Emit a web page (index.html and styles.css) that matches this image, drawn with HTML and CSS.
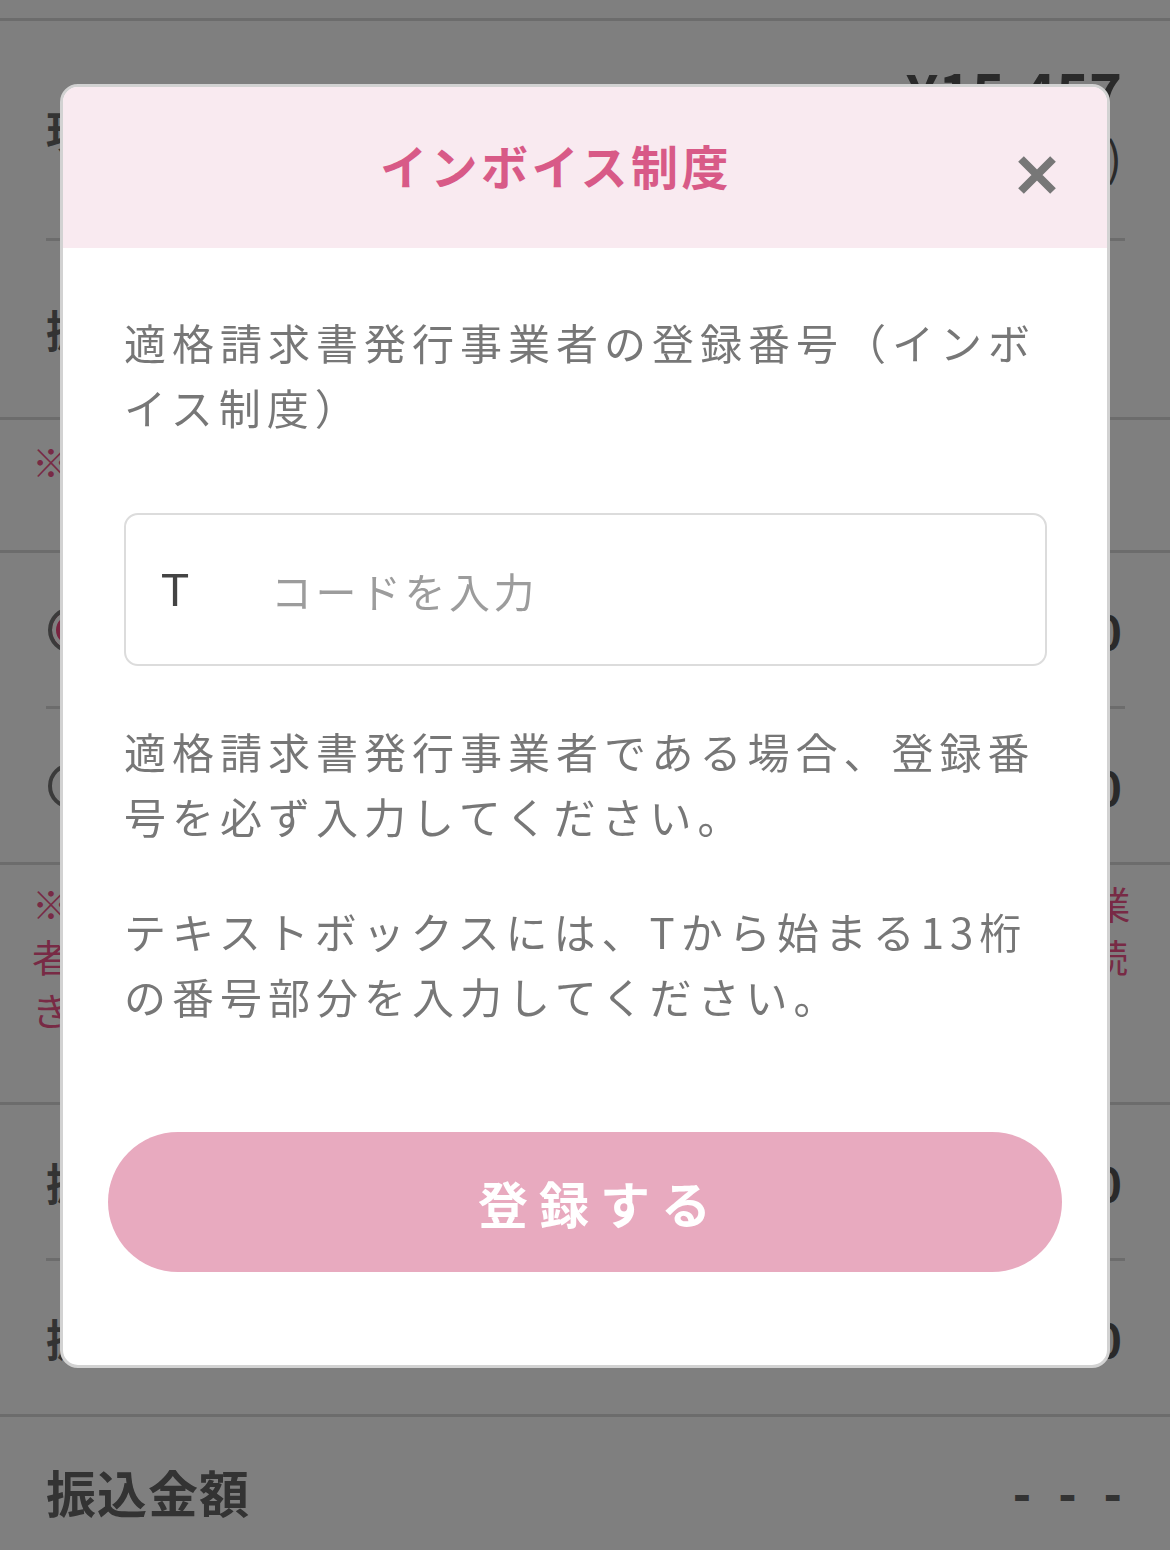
FILE: index.html
```html
<!DOCTYPE html>
<html lang="ja">
<head>
<meta charset="utf-8">
<title>インボイス制度</title>
<link rel="stylesheet" href="styles.css">
</head>
<body>
<div class="page">
  <div class="top-strip"></div>
  <div class="row row-amount">
    <span class="label">現在の売上金額</span>
    <div class="value-col">
      <span class="big-value">¥15,457</span>
      <span class="sub-value">(税込)</span>
    </div>
  </div>
  <div class="divider inset"></div>
  <div class="row row-fee">
    <span class="label">振込手数料</span>
  </div>
  <div class="divider"></div>
  <div class="note note-single">※振込申請は売上金額が一定額以上の場合に可能です。</div>
  <div class="divider"></div>
  <div class="row row-radio">
    <span class="radio on"></span>
    <span class="value">¥0</span>
  </div>
  <div class="divider inset"></div>
  <div class="row row-radio">
    <span class="radio"></span>
    <span class="value">¥0</span>
  </div>
  <div class="divider"></div>
  <div class="note note-multi">※インボイス制度の登録番号の入力により、適格請求書発行事業者としての取り扱いとなります。事業者の方は登録の上でお手続きをお願いします。</div>
  <div class="divider"></div>
  <div class="row row-plain">
    <span class="label">振込予定額</span>
    <span class="value">¥0</span>
  </div>
  <div class="divider inset"></div>
  <div class="row row-plain">
    <span class="label">振込先口座</span>
    <span class="value">¥0</span>
  </div>
  <div class="divider"></div>
  <div class="row row-total">
    <span class="total-label">振込金額</span>
    <span class="dashes">- - -</span>
  </div>
</div>

<div class="overlay"></div>

<div class="modal">
  <div class="modal-header">
    <h1 class="modal-title">インボイス制度</h1>
    <button class="close" aria-label="閉じる">
      <svg width="40" height="40" viewBox="0 0 40 40">
        <path d="M4 4 L36 36 M36 4 L4 36" stroke="#777" stroke-width="8" stroke-linecap="butt"/>
      </svg>
    </button>
  </div>
  <div class="modal-body">
    <p class="text">適格請求書発行事業者の登録番号（インボイス制度）</p>
    <div class="input-box">
      <span class="prefix">T</span>
      <span class="placeholder">コードを入力</span>
    </div>
    <p class="text para2">適格請求書発行事業者である場合、登録番号を必ず入力してください。</p>
    <p class="text para3">テキストボックスには、Tから始まる13桁の番号部分を入力してください。</p>
    <button class="submit">登録する</button>
  </div>
</div>
</body>
</html>
```

FILE: styles.css
```css
* { box-sizing: border-box; }

html, body {
  margin: 0;
  padding: 0;
  background: #ffffff;
  font-family: "Noto Sans CJK JP", "Noto Sans", sans-serif;
}

.page {
  width: 1170px;
  height: 1550px;
  overflow: hidden;
  display: flex;
  flex-direction: column;
  color: #666;
}

.top-strip {
  height: 18px;
  border-bottom: 3px solid #d8d8d8;
  flex: 0 0 auto;
  box-sizing: content-box;
}

.divider {
  height: 3px;
  background: #d8d8d8;
  flex: 0 0 3px;
}
.divider.inset {
  margin: 0 45px 0 46px;
}

.row {
  display: flex;
  align-items: center;
  justify-content: space-between;
  padding: 0 48px 0 46px;
}

.label {
  font-size: 44px;
  font-weight: 700;
  color: #666;
}

.value {
  font-size: 46px;
  font-weight: 700;
  color: #555;
}

.row-amount { height: 217px; }
.value-col {
  display: flex;
  flex-direction: column;
  align-items: flex-end;
  margin-top: -14px;
}
.big-value {
  font-size: 56px;
  font-weight: 700;
  line-height: 66px;
  color: #555;
}
.sub-value {
  font-size: 46px;
  line-height: 64px;
  color: #555;
}

.row-fee { height: 176px; }

.note {
  color: #f0558a;
  font-size: 38px;
  padding: 0 36px 0 32px;
}
.note-single {
  height: 130px;
  padding-top: 16px;
  line-height: 50px;
}
.note-multi {
  height: 237px;
  padding-top: 11px;
  line-height: 53px;
}

.row-radio { height: 153px; }
.radio {
  width: 46px;
  height: 46px;
  border-radius: 50%;
  border: 4px solid #777;
  margin-left: 2px;
}
.radio.on {
  background: #f24880;
  box-shadow: inset 0 0 0 4px #fff;
}

.row-plain { height: 153px; }

.row-total {
  flex: 1 1 auto;
  align-items: center;
  padding-top: 14px;
}
.total-label {
  font-size: 50px;
  font-weight: 700;
  color: #666;
  letter-spacing: 1px;
}
.dashes {
  font-size: 48px;
  font-weight: 900;
  color: #666;
  letter-spacing: 8px;
  margin-right: -8px;
}

.overlay {
  position: fixed;
  inset: 0;
  background: rgba(0, 0, 0, 0.5);
}

.modal {
  position: fixed;
  top: 84px;
  left: 60px;
  width: 1050px;
  height: 1284px;
  background: #fff;
  border: 3px solid #d2d2d2;
  border-radius: 18px;
  overflow: hidden;
  display: flex;
  flex-direction: column;
}

.modal-header {
  position: relative;
  height: 161px;
  flex: 0 0 161px;
  background: #f9eaf0;
  display: flex;
  align-items: center;
  justify-content: center;
  padding-right: 58px;
}

.modal-title {
  margin: 0;
  font-size: 47px;
  font-weight: 700;
  color: #d85a87;
  letter-spacing: 3.5px;
  line-height: 1;
  margin-top: -6px;
}

.close {
  position: absolute;
  right: 50px;
  top: 68px;
  width: 40px;
  height: 40px;
  padding: 0;
  border: 0;
  background: transparent;
}
.close svg { display: block; }

.modal-body {
  padding: 61px 60px 0 61px;
  display: flex;
  flex-direction: column;
}

.text {
  margin: 0;
  font-size: 42px;
  line-height: 65px;
  letter-spacing: 6px;
  color: #777;
}

.input-box {
  margin-top: 74px;
  height: 153px;
  border: 2px solid #dcdcdc;
  border-radius: 14px;
  display: flex;
  align-items: center;
  padding-left: 35px;
}
.prefix {
  font-family: "Liberation Sans", sans-serif;
  font-size: 46px;
  color: #444;
  width: 110px;
}
.placeholder {
  font-size: 41px;
  letter-spacing: 3.5px;
  color: #9c9c9c;
}

.para2 { margin-top: 52px; }
.para3 { margin-top: 50px; }

.submit {
  margin: 104px -15px 0 -16px;
  height: 140px;
  border: 0;
  border-radius: 70px;
  background: #e8aabf;
  color: #fff;
  font-family: "Noto Sans CJK JP", sans-serif;
  font-size: 50px;
  font-weight: 700;
  letter-spacing: 11px;
  padding-left: 36px;
}
```
